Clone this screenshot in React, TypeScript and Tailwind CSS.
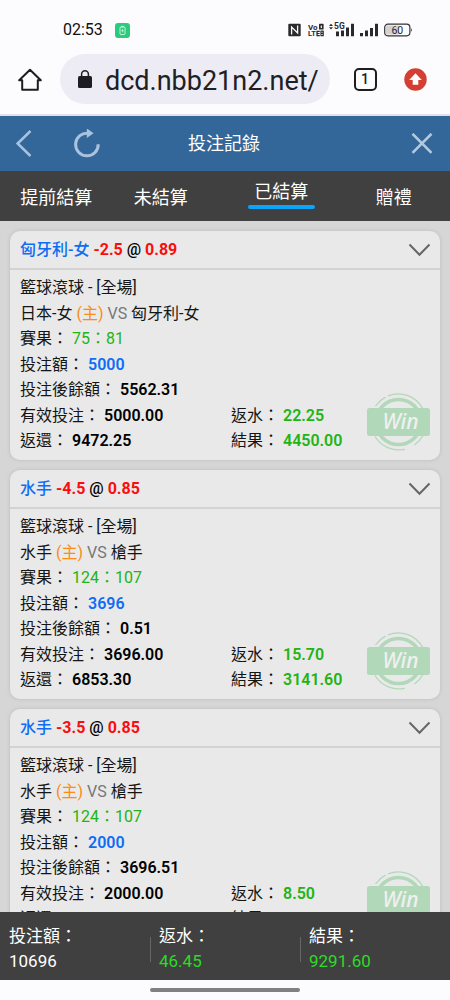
import React from "react";

type Bet = {
  pick: string;
  handicap: string;
  odds: string;
  home: string;
  away: string;
  score: string;
  stake: string;
  balance: string;
  valid: string;
  returned: string;
  rebate: string;
  result: string;
};

const bets: Bet[] = [
  {
    pick: "匈牙利-女", handicap: "-2.5", odds: "0.89", home: "日本-女", away: "匈牙利-女", score: "75：81",
    stake: "5000", balance: "5562.31", valid: "5000.00", returned: "9472.25", rebate: "22.25", result: "4450.00",
  },
  {
    pick: "水手", handicap: "-4.5", odds: "0.85", home: "水手", away: "槍手", score: "124：107",
    stake: "3696", balance: "0.51", valid: "3696.00", returned: "6853.30", rebate: "15.70", result: "3141.60",
  },
  {
    pick: "水手", handicap: "-3.5", odds: "0.85", home: "水手", away: "槍手", score: "124：107",
    stake: "2000", balance: "3696.51", valid: "2000.00", returned: "3708.50", rebate: "8.50", result: "1700.00",
  },
];

function StatusBar() {
  return (
    <div className="flex h-[54px] shrink-0 items-center justify-between pt-[6px] pr-[37px] pl-[63px]">
      <div className="flex items-center gap-3">
        <span className="text-[16px] leading-5 text-[#111]">02:53</span>
        <svg className="size-[15px]" viewBox="0 0 15 15" aria-hidden="true">
          <rect width="15" height="15" rx="3" fill="#2acb7c" />
          <rect x="5" y="4" width="5" height="7.5" rx="1" fill="none" stroke="#e6fff2" strokeWidth="0.8" />
          <path d="M6.3 3.4h2.4" stroke="#e6fff2" strokeWidth="0.9" />
          <path d="M7.8 5.6 6.2 8h1.2l-.3 1.8L8.9 7.4H7.6z" fill="#e6fff2" />
        </svg>
      </div>
      <svg className="h-[16px] w-[125px]" viewBox="0 0 125 16" aria-hidden="true" fill="#2a2a2e">
        <rect x="0.3" y="1.8" width="12.4" height="12.4" rx="1" />
        <path d="M3.6 12.4V5L9.6 11V3.6" fill="none" stroke="#fcfbfe" strokeWidth="1.3" />
        <text x="20" y="7.5" fontFamily="Roboto, sans-serif" fontSize="8" fontWeight="700">Vo</text>
        <text x="20" y="14.2" fontFamily="Roboto, sans-serif" fontSize="7.4" fontWeight="700">LT</text>
        <path d="M28.4 8.8h3.4v1.1h-2.1v1h1.9v1h-1.9v1.2h2.1v1.1h-3.4z" />
        <rect x="31" y="1.8" width="4.6" height="5.8" rx="0.6" />
        <rect x="32.4" y="8.6" width="3.4" height="5.7" rx="0.6" />
        <path d="M32.7 3.4h1.2v2.6h-1.2zM33.4 9.8h1.2v.9h-1.2zM33.4 12h1.2v.9h-1.2z" fill="#fcfbfe" />
        <path d="M43 1.8l2 2.2h-4zM43 7.4l2-2.2h-4z" />
        <text x="46" y="7.4" fontFamily="Roboto, sans-serif" fontSize="8.5" fontWeight="700">5G</text>
        <path d="M48 9.5h3v4.7h-3zM53 8.6h3v5.6h-3zM58 5.5h3v8.7h-3zM63 1.8h3v12.4h-3z" />
        <path d="M72 11h3v3.2h-3zM77 8.5h3v5.7h-3zM82 6h3v8.2h-3zM87 1.8h3v12.4h-3z" />
        <rect x="96.7" y="2.2" width="25.2" height="11.6" rx="3.2" fill="#fcfbfe" stroke="#333" strokeWidth="1.2" />
        <path d="M99.5 3.6h11.5v8.8H99.5a1.5 1.5 0 0 1-1.5-1.5V5.1a1.5 1.5 0 0 1 1.5-1.5z" fill="#d2d1d4" />
        <path d="M123 6q1.8 2 0 4z" />
        <text x="109.3" y="11.8" textAnchor="middle" fontFamily="Roboto, sans-serif" fontSize="10.5">60</text>
      </svg>
    </div>
  );
}

function BrowserBar() {
  return (
    <div className="flex h-[62px] shrink-0 items-start border-b-2 border-[#e3e2eb] pr-5">
      <button type="button" aria-label="Home" className="flex h-[50px] w-[60px] items-center justify-center">
        <svg className="size-6" viewBox="0 0 24 24" fill="none" stroke="#1e1e22" strokeWidth="2" aria-hidden="true">
          <path d="M1.2 13.2H4.2V22.8H19.8V13.2H22.8L12 2.8z" strokeLinejoin="round" />
        </svg>
      </button>
      <div className="flex h-[50px] min-w-0 flex-1 items-center rounded-full bg-[#edecf5] pl-[18px]">
        <svg className="h-[18px] w-[14px] shrink-0" viewBox="0 0 14 18" aria-hidden="true">
          <rect x="0" y="6" width="14" height="12" rx="1.6" fill="#1e1e22" />
          <path d="M3.6 6.5V4.2a3.4 3.4 0 0 1 6.8 0v2.3" fill="none" stroke="#1e1e22" strokeWidth="1.5" />
        </svg>
        <input
          aria-label="Address"
          defaultValue="dcd.nbb21n2.net/"
          className="ml-[13px] w-full min-w-0 bg-transparent pt-1 text-[27px] leading-[36px] text-[#202024] outline-none"
        />
      </div>
      <button type="button" aria-label="Tabs" className="flex h-[50px] w-[70px] items-center justify-center">
        <span className="flex size-[23px] items-center justify-center rounded-[5px] border-2 border-[#1e1e22] text-[14px] leading-none font-medium text-[#1e1e22]">
          1
        </span>
      </button>
      <button type="button" aria-label="Update" className="flex h-[50px] w-[30px] items-center justify-center">
        <svg className="size-[23px]" viewBox="0 0 23 23" aria-hidden="true">
          <circle cx="11.5" cy="11.5" r="11.2" fill="#d43f31" />
          <path d="M11.5 5.2 17.8 12h-3.5v4.8H8.7V12H5.2z" fill="#fff" />
        </svg>
      </button>
    </div>
  );
}

function TitleBar() {
  return (
    <header className="flex h-[55px] shrink-0 items-center bg-[#336699] text-white">
      <div className="flex flex-1 items-center gap-[39px] pl-[15px]">
        <button type="button" aria-label="返回">
          <svg className="h-7 w-[18px]" viewBox="0 0 18 28" fill="none" stroke="#a9c2de" strokeWidth="2.5" aria-hidden="true">
            <path d="M15.5 1 2.6 13.5 15.5 26" />
          </svg>
        </button>
        <button type="button" aria-label="重新整理">
          <svg className="h-[30px] w-[30px]" viewBox="0 0 30 30" aria-hidden="true">
            <path d="M26.2 15.2A11.3 11.3 0 1 1 16 4.3" fill="none" stroke="#a9c2de" strokeWidth="3" />
            <path d="M14.8 -0.6v9.6l6.8-4.8z" fill="#a9c2de" />
          </svg>
        </button>
      </div>
      <h1 className="text-[18px] leading-6">投注記錄</h1>
      <div className="flex flex-1 justify-end pr-[17px]">
        <button type="button" aria-label="關閉">
          <svg className="size-[22px]" viewBox="0 0 22 22" stroke="#b5c9de" strokeWidth="2.6" aria-hidden="true">
            <path d="M1.5 .8l19 19M20.5 .8l-19 19" />
          </svg>
        </button>
      </div>
    </header>
  );
}

function Tabs() {
  return (
    <nav className="grid h-[50px] shrink-0 grid-cols-4 bg-[#404040] text-center text-[18px] leading-6 text-white">
      <button type="button" className="pt-1">提前結算</button>
      <button type="button" className="pt-1 pr-4">未結算</button>
      <button type="button" className="flex flex-col items-center pt-[9px]" aria-current="page">
        <span>已結算</span>
        <span className="mt-px h-1 w-[67px] rounded-full bg-[#0aa5fb]" />
      </button>
      <button type="button" className="pt-1">贈禮</button>
    </nav>
  );
}

function WinStamp() {
  return (
    <svg className="absolute right-[10px] bottom-[9px] h-[58px] w-[63px]" viewBox="0 0 63 58" aria-label="Win">
      <g fill="none" stroke="#b2d8ba">
        <circle cx="31.5" cy="29" r="22.5" strokeWidth="3.6" />
        <path d="M21 2.8A28 28 0 0 1 56 16" strokeWidth="1.3" />
        <path d="M8.5 13A28 28 0 0 1 18.5 4.2" strokeWidth="1.3" />
        <path d="M8 43.5A28 28 0 0 0 37.8 56.3" strokeWidth="1.3" />
        <path d="M47.5 52A28 28 0 0 0 56 42.5" strokeWidth="1.3" />
      </g>
      <rect x="0" y="15" width="63" height="28" rx="2.5" fill="#b2d8ba" />
      <text x="33.5" y="36.2" textAnchor="middle" fontFamily="Noto Sans, sans-serif" fontSize="21" fontWeight="500" fontStyle="italic" fill="#f0f0f0">
        Win
      </text>
    </svg>
  );
}

function Field({ label, value, tone }: { label: string; value: string; tone: string }) {
  return (
    <p>
      {label}： <span className={tone}>{value}</span>
    </p>
  );
}

function BetCard({ bet }: { bet: Bet }) {
  const strong = "font-semibold text-black";
  const green = "font-semibold text-[#22b414]";
  return (
    <article className="relative shrink-0 rounded-[10px] bg-[#e9e9e9] shadow-[0_0_4px_rgba(0,0,0,0.12)]">
      <div className="flex h-[39px] items-center justify-between border-b-2 border-[#d3d3d3] pr-[9px] pl-[10px]">
        <h2 className="font-medium text-black">
          <span className="text-[#0e6df5]">{bet.pick}</span>{" "}
          <span className="font-bold text-[#fb0d0d]">{bet.handicap}</span> @{" "}
          <span className="font-bold text-[#fb0d0d]">{bet.odds}</span>
        </h2>
        <button type="button" aria-label="展開">
          <svg className="h-[14px] w-[23px]" viewBox="0 0 23 14" fill="none" stroke="#666" strokeWidth="2" aria-hidden="true">
            <path d="M1.5 1.5 11.5 11.7 21.5 1.5" />
          </svg>
        </button>
      </div>
      <div className="flex flex-col gap-px px-[10px] pt-[5px] pb-[7px]">
        <p>籃球滾球 - [全場]</p>
        <div>
          <p>
            {bet.home} <span className="text-[#fb8c14]">(主)</span> <span className="text-[#777]">VS</span> {bet.away}
          </p>
          <Field label="賽果" value={bet.score} tone="text-[#22b414]" />
        </div>
        <div>
          <Field label="投注額" value={bet.stake} tone="font-semibold text-[#0e6df5]" />
          <Field label="投注後餘額" value={bet.balance} tone={strong} />
        </div>
        <div className="grid grid-cols-2 gap-x-[12px]">
          <Field label="有效投注" value={bet.valid} tone={strong} />
          <Field label="返水" value={bet.rebate} tone={green} />
          <Field label="返還" value={bet.returned} tone={strong} />
          <Field label="結果" value={bet.result} tone={green} />
        </div>
      </div>
      <WinStamp />
    </article>
  );
}

function Totals() {
  return (
    <footer className="shrink-0 bg-[#404040]">
      <dl className="grid h-[68px] grid-cols-3 items-center pt-[6px] text-[17px] leading-[25px] text-white">
        <div className="pl-[9px]">
          <dt>投注額：</dt>
          <dd>10696</dd>
        </div>
        <div className="flex items-center gap-2">
          <span className="h-[25px] w-px bg-[#666]" />
          <div>
            <dt>返水：</dt>
            <dd className="text-[#2bdc26]">46.45</dd>
          </div>
        </div>
        <div className="flex items-center gap-2">
          <span className="h-[25px] w-px bg-[#666]" />
          <div>
            <dt>結果：</dt>
            <dd className="text-[#2bdc26]">9291.60</dd>
          </div>
        </div>
      </dl>
    </footer>
  );
}

export default function App() {
  return (
    <div
      lang="zh-Hant"
      className="flex h-screen flex-col bg-[#fcfbfe] font-[Roboto,'Noto_Sans_CJK_TC',sans-serif] text-[16px] leading-[25px] text-[#151515]"
    >
      <StatusBar />
      <BrowserBar />
      <TitleBar />
      <Tabs />
      <main className="flex min-h-0 flex-1 flex-col gap-[10px] overflow-y-auto bg-[#d6d6d6] p-[10px] [scrollbar-width:none]">
        {bets.map((bet, i) => (
          <BetCard key={i} bet={bet} />
        ))}
      </main>
      <Totals />
      <div className="flex h-5 shrink-0 items-center justify-center">
        <span className="h-1 w-1/3 rounded-full bg-[#808080]" />
      </div>
    </div>
  );
}
